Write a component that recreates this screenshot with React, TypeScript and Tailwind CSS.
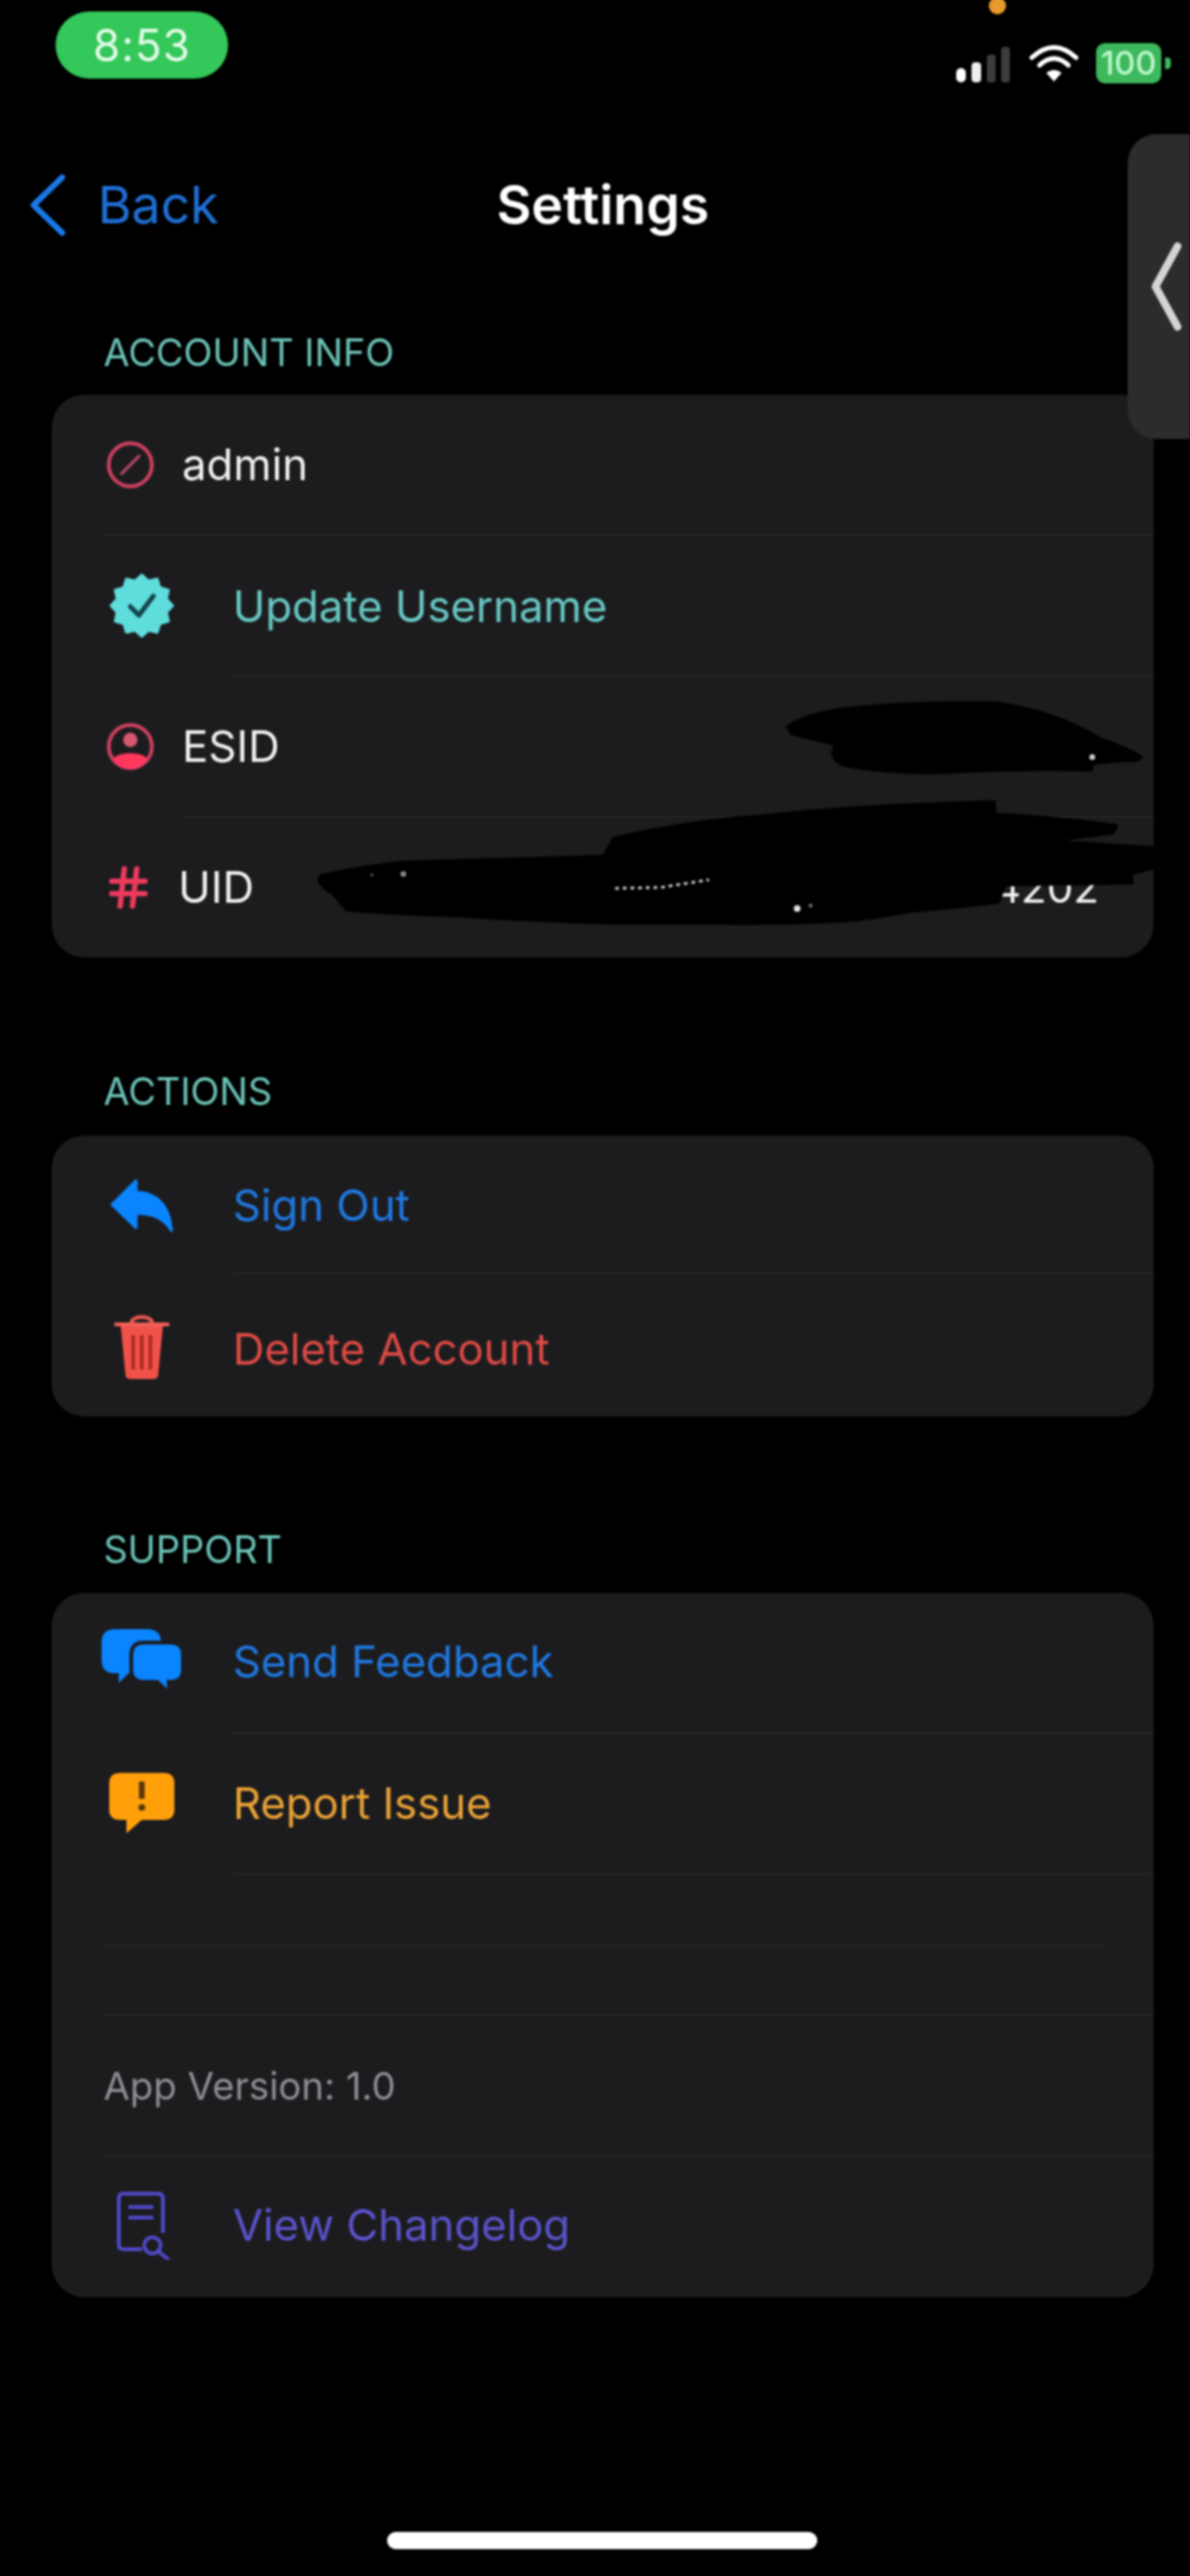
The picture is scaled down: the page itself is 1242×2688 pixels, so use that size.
import React from "react";
import { Hash } from "lucide-react";

const font = { fontFamily: "Inter, 'Liberation Sans', sans-serif" };

const badgePoints = (() => {
  const pts: string[] = [];
  for (let i = 0; i < 24; i++) {
    const r = i % 2 === 0 ? 32 : 26.5;
    const a = (i * Math.PI) / 12 - Math.PI / 2;
    pts.push(`${(34 + r * Math.cos(a)).toFixed(2)},${(34 + r * Math.sin(a)).toFixed(2)}`);
  }
  return pts.join(" ");
})();

const BlockedIcon = () => (
  <svg className="shrink-0" width="50" height="50" viewBox="0 0 50 50" fill="none" stroke="#c9405f">
    <circle cx="25" cy="25" r="22.5" strokeWidth="4" />
    <path d="M16 34 L34 16" strokeWidth="3.500" strokeLinecap="round" stroke="#a8485c" />
  </svg>
);

const BadgeIcon = () => (
  <svg className="shrink-0" width="68" height="68" viewBox="0 0 68 68">
    <polygon points={badgePoints} fill="#5fdcdc" stroke="#5fdcdc" strokeWidth="3" strokeLinejoin="round" />
    <path d="M22 35 L31 44 L46 24" fill="none" stroke="#14474c" strokeWidth="5" strokeLinecap="round" strokeLinejoin="round" />
  </svg>
);

const PersonIcon = () => (
  <svg className="shrink-0" width="50" height="50" viewBox="0 0 50 50">
    <circle cx="25" cy="25" r="22.5" fill="none" stroke="#c9405f" strokeWidth="4" />
    <circle cx="25" cy="18" r="7.500" fill="#d8566f" />
    <path d="M7 38 C12 30 38 30 43 38 C38 46 32 48 25 48 C18 48 12 46 7 38 Z" fill="#ff375f" />
  </svg>
);

const ReplyIcon = () => (
  <svg className="shrink-0" width="68" height="58" viewBox="0 0 68 58">
    <path d="M3 28 L28 3 L28 15 C50 15 63 30 65 55 C56 41 44 37 28 37 L28 52 Z" fill="#0a84ff" stroke="#0a84ff" strokeWidth="3" strokeLinejoin="round" />
  </svg>
);

const TrashIcon = () => (
  <svg className="shrink-0" width="58" height="72" viewBox="0 0 58 72">
    <path d="M18 12 C18 3 40 3 40 12" fill="none" stroke="#e9574e" strokeWidth="4" />
    <path d="M2 13 H56" stroke="#f0605a" strokeWidth="4" strokeLinecap="round" />
    <path d="M7 15 H51 L46 66 Q45.500 70 41 70 H17 Q12.500 70 12 66 Z" fill="#f0524a" />
    <path d="M20 24 V60 M29 24 V60 M38 24 V60" stroke="#b32a25" strokeWidth="4" />
  </svg>
);

const BubblesIcon = () => (
  <svg className="shrink-0 ml-[2px]" width="86" height="68" viewBox="0 0 86 68">
    <path d="M14 0 H48 Q62 0 62 14 V32 Q62 46 48 46 H28 L18 56 L18 46 H14 Q0 46 0 32 V14 Q0 0 14 0 Z" fill="#0a84ff" />
    <path d="M44 14 H72 Q85 14 85 27 V42 Q85 55 72 55 H70 L71 67 L58 55 H44 Q31 55 31 42 V27 Q31 14 44 14 Z" fill="#0a84ff" stroke="#1c1c1e" strokeWidth="4" />
  </svg>
);

const ReportIcon = () => (
  <svg className="shrink-0" width="68" height="64" viewBox="0 0 68 64">
    <path d="M11 0 H57 Q68 0 68 11 V38 Q68 49 57 49 H34 L18 63 L18 49 H11 Q0 49 0 38 V11 Q0 0 11 0 Z" fill="#ff9f0a" />
    <path d="M34 9 V27" stroke="#5b3606" strokeWidth="6" />
    <circle cx="34" cy="36" r="3.500" fill="#5b3606" />
  </svg>
);

const ChangelogIcon = () => (
  <svg className="shrink-0 ml-[4px]" width="58" height="72" viewBox="0 0 58 72" fill="none" stroke="#4f48c4" strokeWidth="4">
    <path d="M27 61 H8 Q3 61 3 56 V8 Q3 3 8 3 H44 Q49 3 49 8 V44" />
    <path d="M13 17 H39 M13 28 H39" />
    <circle cx="38" cy="57" r="8.500" />
    <path d="M44 63 L54 71" strokeLinecap="round" />
  </svg>
);

const Divider = ({ inset }: { inset: string }) => (
  <div className={`h-px bg-[#2c2c2e] ${inset}`} />
);

const WideRow = ({
  icon,
  label,
  color,
  h = "h-[146px]",
  textShift = "",
}: {
  icon: React.ReactNode;
  label: string;
  color: string;
  h?: string;
  textShift?: string;
}) => (
  <div className={`flex items-center pl-[54px] ${h}`}>
    <div className="flex w-[80px] mr-[55px] justify-center items-center">{icon}</div>
    <span className={`text-[45.6px] leading-none ${color} ${textShift}`}>{label}</span>
  </div>
);

const NarrowRow = ({
  icon,
  label,
  value,
  cell = "w-[56px] mr-[26px]",
}: {
  icon: React.ReactNode;
  label: string;
  value?: string;
  cell?: string;
}) => (
  <div className="flex items-center pl-[54px] pr-[57px] h-[146px]">
    <div className={`flex justify-center items-center ${cell}`}>{icon}</div>
    <span className="text-[45.6px] leading-none text-[#f2f2f2]">{label}</span>
    {value && <span className="ml-auto text-[44px] leading-none text-[#f2f2f2]">{value}</span>}
  </div>
);

const Label = ({ children, className }: { children: string; className: string }) => (
  <div className={`pl-[108px] pt-[2px] h-[48px] flex items-center text-[39.5px] leading-none text-[#6cc4b8] ${className}`}>{children}</div>
);

const Card = ({ children }: { children: React.ReactNode }) => (
  <div className="ml-[54px] w-[1150px] rounded-[34px] bg-[#1c1c1e] overflow-hidden">{children}</div>
);

const Redactions = () => (
  <svg className="absolute left-0 top-0" width="1242" height="1100" viewBox="0 0 1242 1100">
    <path
      d="M820 758 Q835 745 880 738 Q960 730 1040 732 Q1100 740 1150 770 Q1185 782 1193 790 Q1190 797 1175 795 L1142 798 L1140 805 Q1060 803 980 808 Q920 808 880 800 Q862 792 870 778 Q845 772 825 767 Z"
      fill="#000"
    />
    <path
      d="M331 918 Q332 912 340 911 Q380 902 423 898 L629 892 L640 873 Q720 855 793 850 Q900 838 1039 835 L1040 848 Q1110 852 1166 860 Q1168 867 1160 871 L1112 877 L1204 883 L1204 907 L1183 913 L1183 923 L1050 925 L1043 943 Q1000 948 947 953 Q900 962 870 963 Q800 966 755 965 L640 965 Q550 962 472 957 Q410 955 361 951 L346 933 Q335 928 331 918 Z"
      fill="#000"
    />
    <circle cx="1140" cy="790" r="3" fill="#cfcfcf" />
    <circle cx="832" cy="948" r="3.500" fill="#e5e5e5" />
    <circle cx="846" cy="945" r="2" fill="#777" />
    <path d="M642 927 L690 926 L740 918" stroke="#bdbdbd" strokeWidth="3" strokeDasharray="4 4" fill="none" />
    <circle cx="421" cy="912" r="3" fill="#8a8a8a" />
    <circle cx="388" cy="913" r="1.500" fill="#666" />
  </svg>
);

export default function App() {
  return (
    <div className="w-[1242px] h-[2688px] bg-black overflow-hidden">
      <div className="relative w-[1242px] h-[2688px] bg-black blur-[1.2px]" style={font}>
        {/* status bar */}
        <div className="relative flex items-start justify-between h-[140px] pt-[12px] pl-[58px] pr-[20px]">
          <div className="flex items-center justify-center w-[180px] h-[70px] rounded-[35px] bg-[#34c759]">
            <span className="text-[46px] leading-none tracking-[1px] text-[#e4fbe9]">8:53</span>
          </div>
          <div className="flex items-center mt-[33px]">
            <svg width="58" height="42" viewBox="0 0 58 42">
              <rect x="0" y="26" width="10" height="15" rx="5" fill="#fff" />
              <rect x="16" y="20" width="10" height="21" rx="4" fill="#eee" />
              <rect x="32" y="12" width="9" height="29" rx="3" fill="#3d3d3d" />
              <rect x="47" y="4" width="9" height="37" rx="3" fill="#3d3d3d" />
            </svg>
            <svg className="ml-[18px]" width="52" height="42" viewBox="0 0 52 42" fill="none" stroke="#fff" strokeWidth="5">
              <path d="M3 15 Q26 -6 49 15" strokeLinecap="round" />
              <path d="M11 23 Q26 9 41 23" strokeLinecap="round" />
              <path d="M18 31 Q26 25 34 31 L26 40 Z" fill="#fff" stroke="none" />
            </svg>
            <div className="ml-[18px] flex items-center justify-center w-[68px] h-[42px] rounded-[9px] bg-[#3db85c]">
              <span className="text-[34px] font-medium leading-none text-[#bdf7cb]">100</span>
            </div>
            <div className="ml-[4px] w-[6px] h-[12px] rounded-r-[4px] bg-[#3db85c]" />
          </div>
          <div className="absolute left-[1032px] top-[-3px] w-[18px] h-[18px] rounded-full bg-[#e89a2c]" />
        </div>

        {/* nav */}
        <div className="flex items-center h-[148px] pl-[31px]">
          <svg width="38" height="64" viewBox="0 0 38 64" fill="none" stroke="#1a78e8" strokeWidth="6" strokeLinecap="round" strokeLinejoin="round">
            <path d="M34 3 L4 32 L34 61" />
          </svg>
          <span className="ml-[33px] text-[54px] leading-none text-[#1f6fd6]">Back</span>
          <span className="ml-[290px] text-[56px] font-semibold leading-none text-white">Settings</span>
        </div>

        {/* account */}
        <Label className="mt-[56px] mb-[20px]">ACCOUNT INFO</Label>
        <Card>
          <NarrowRow icon={<BlockedIcon />} label="admin" />
          <Divider inset="ml-[54px]" />
          <WideRow icon={<BadgeIcon />} label="Update Username" color="text-[#68c8c4]" textShift="mt-[2px]" />
          <Divider inset="ml-[189px]" />
          <NarrowRow icon={<PersonIcon />} label="ESID" />
          <Divider inset="ml-[136px]" />
          <NarrowRow icon={<Hash size={52} strokeWidth={2.6} color="#ef3a5d" className="shrink-0" />} label="UID" value="4202" cell="w-[52px] mr-[26px]" />
        </Card>

        {/* actions */}
        <Label className="mt-[116px] mb-[22px]">ACTIONS</Label>
        <Card>
          <WideRow icon={<ReplyIcon />} label="Sign Out" color="text-[#1f78e0]" h="h-[143px] pt-[3px]" />
          <Divider inset="ml-[189px]" />
          <WideRow icon={<TrashIcon />} label="Delete Account" color="text-[#dc4a44]" h="h-[149px] pt-[3px]" textShift="mt-[6px]" />
        </Card>

        {/* support */}
        <Label className="mt-[115px] mb-[21px]">SUPPORT</Label>
        <Card>
          <WideRow icon={<BubblesIcon />} label="Send Feedback" color="text-[#1f78e0]" h="h-[146px] pb-[3px]" />
          <Divider inset="ml-[189px]" />
          <WideRow icon={<ReportIcon />} label="Report Issue" color="text-[#eaa236]" />
          <Divider inset="ml-[189px]" />
          <div className="h-[74px]" />
          <Divider inset="ml-[54px] mr-[54px]" />
          <div className="h-[71px]" />
          <Divider inset="ml-[54px]" />
          <div className="flex items-center pl-[54px] pt-[2px] h-[146px]">
            <span className="text-[40px] leading-none text-[#8e8e93]">App Version: 1.0</span>
          </div>
          <Divider inset="ml-[54px]" />
          <WideRow icon={<ChangelogIcon />} label="View Changelog" color="text-[#5a54cc]" h="h-[147px] pb-[3px]" />
        </Card>

        {/* home indicator */}
        <div className="absolute left-[404px] top-[2642px] w-[449px] h-[18px] rounded-full bg-white" />

        {/* redaction scribbles */}
        <Redactions />

        {/* side handle */}
        <div className="absolute right-0 top-[140px] w-[65px] h-[318px] rounded-l-[30px] bg-[#2c2c2e] flex items-center justify-end pr-[8px]">
          <svg width="34" height="94" viewBox="0 0 34 94" fill="none" stroke="#d4d4d4" strokeWidth="8" strokeLinecap="round" strokeLinejoin="round">
            <path d="M29 5 L6 47 L29 89" />
          </svg>
        </div>
      </div>
    </div>
  );
}
